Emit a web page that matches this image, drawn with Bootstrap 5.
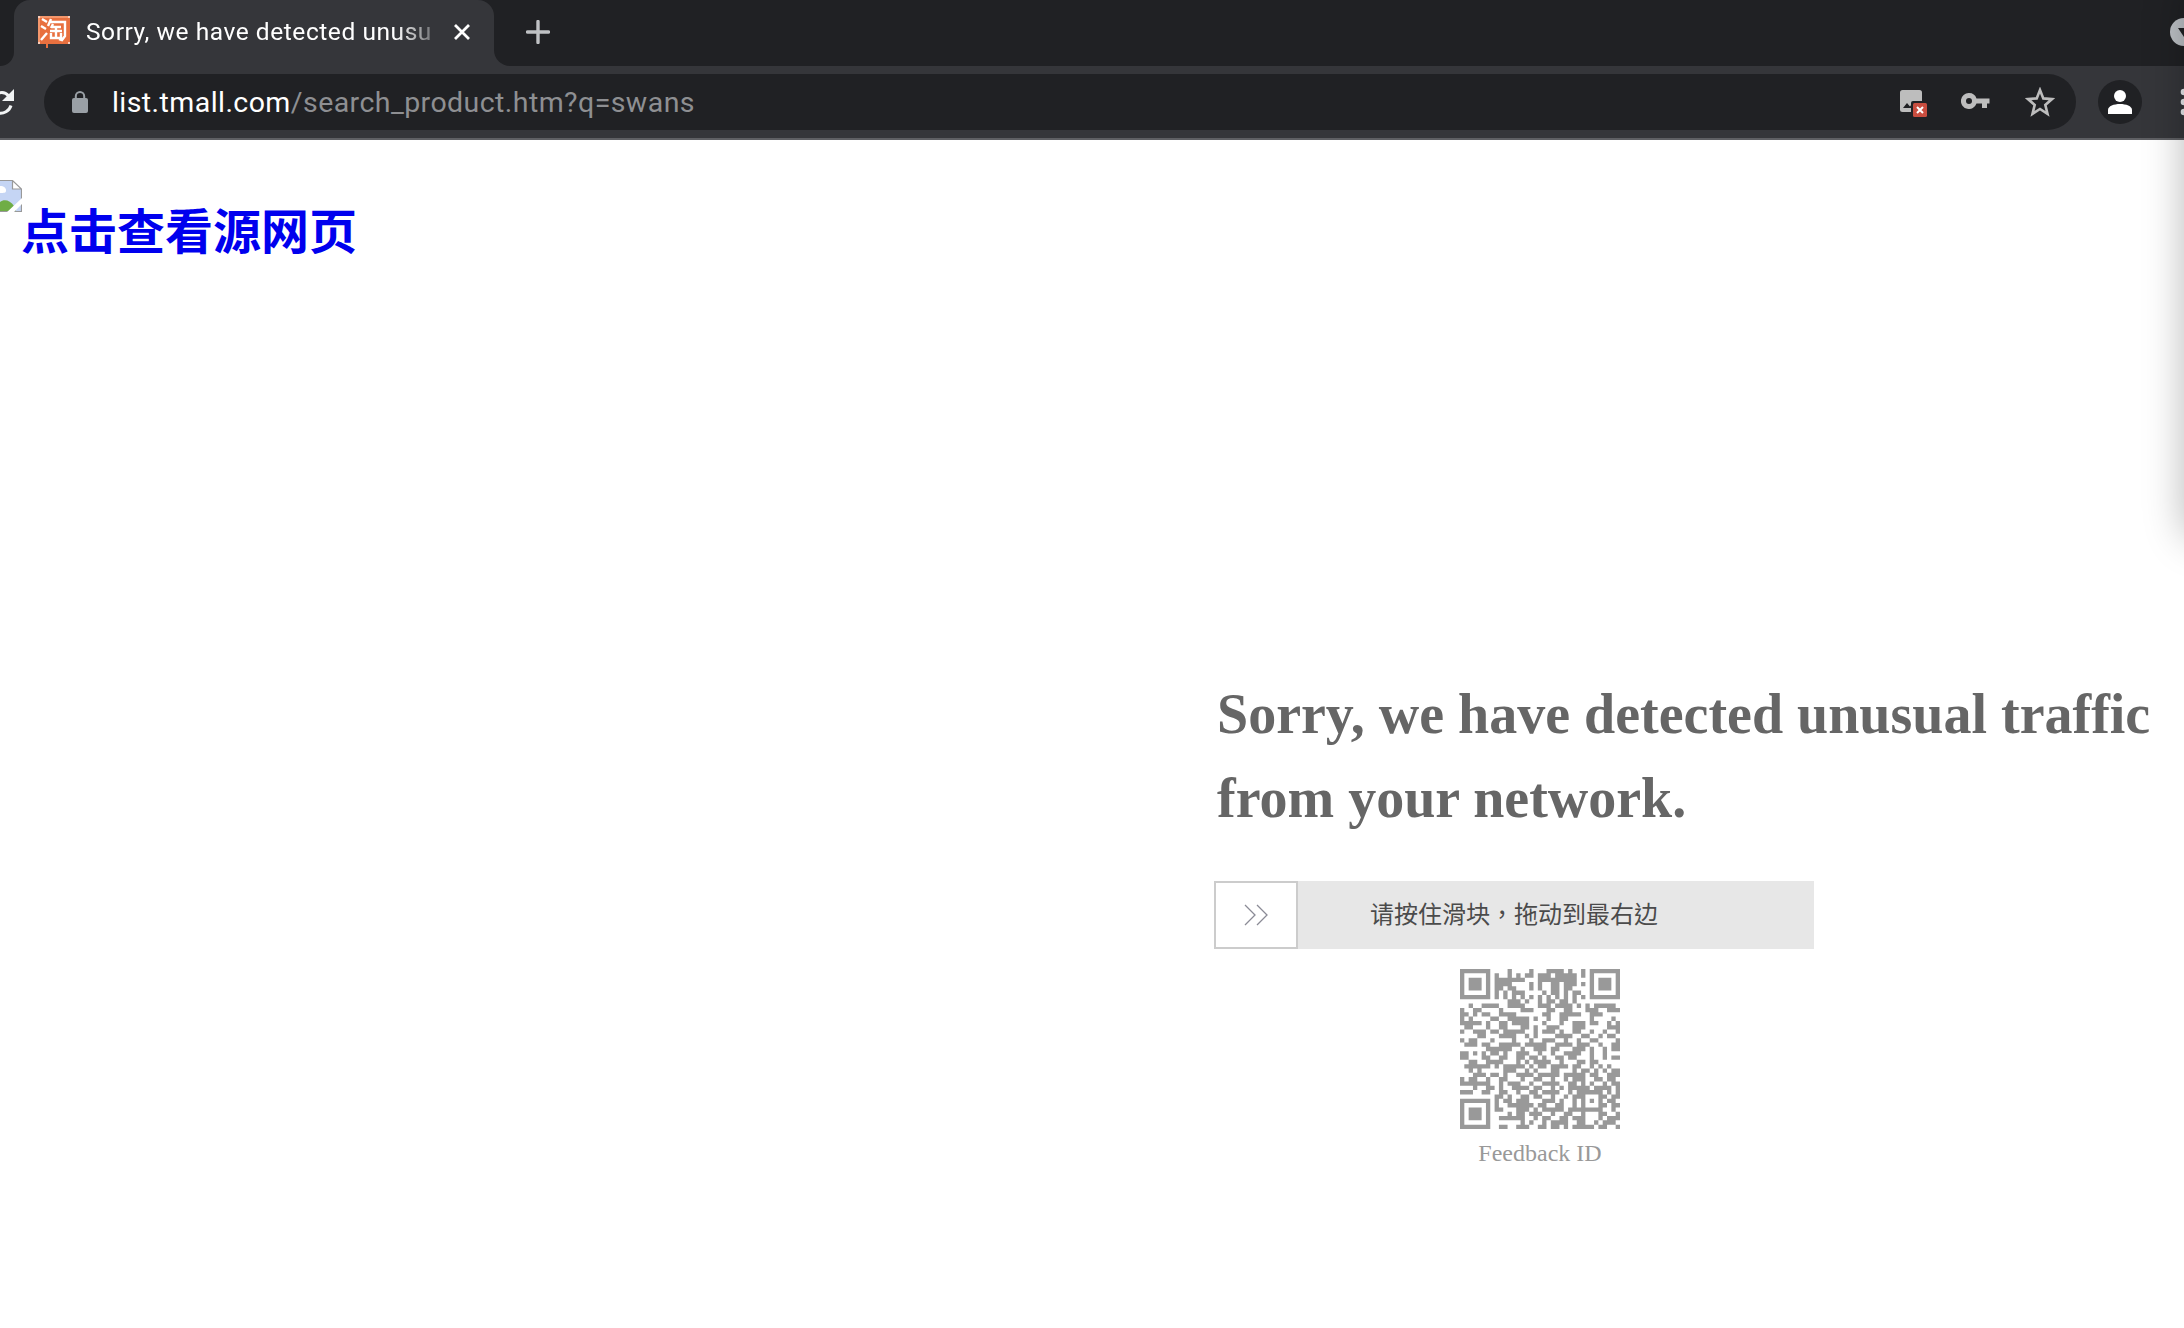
<!DOCTYPE html>
<html lang="zh">
<head>
  <meta charset="UTF-8">
  <meta name="viewport" content="width=device-width, initial-scale=1.0">
  <title>Sorry, we have detected unusual traffic</title>
  <link href="https://cdn.jsdelivr.net/npm/bootstrap@5.3.0/dist/css/bootstrap.min.css" rel="stylesheet">
  <style>
    body { width: 2184px; height: 1328px; overflow: hidden; font-family: "Liberation Serif", "Noto Sans CJK SC", serif; }
    svg { display: block; flex-shrink: 0; }
    .tab-strip { height: 66px; background: #202124; font-family: Roboto, sans-serif; }
    .prev-tab { width: 14px; background: #202124; border-bottom-right-radius: 16px; }
    .strip-base { background: #35363a; }
    .active-tab { width: 480px; background: #35363a; padding-left: 24px; border-radius: 16px 16px 0 0; }
    .tab-title { width: 352px; margin-left: 16px; font-size: 24.5px; line-height: 64px; letter-spacing: .56px; color: #fff;
      -webkit-mask-image: linear-gradient(90deg, #000 88%, transparent 103%); mask-image: linear-gradient(90deg, #000 88%, transparent 103%); }
    .strip-rest { background: #202124; border-bottom-left-radius: 16px; padding-left: 32px; }
    .tool-bar { height: 74px; background: #35363a; border-bottom: 2px solid #5f6064; padding-top: 8px; }
    .omnibox { width: 2032px; height: 56px; margin-left: 30px; border-radius: 28px; background: #202124; padding: 0 21px 0 28px; }
    .url { margin-left: 24px; padding-top: 1px; font: 28.5px/56px Roboto, sans-serif; letter-spacing: .43px; color: #8e8f92; }
    .url span { color: #fff; }
    .avatar { width: 44px; height: 44px; margin-left: 22px; background: #202124; }
    .page { height: 1188px; background: #fff; }
    .edge-shade { position: absolute; top: -20px; right: -100px; width: 100px; height: 560px; border-radius: 20px; box-shadow: 0 0 40px rgba(0, 0, 0, .28); }
    .logo-link { padding-top: 40px; height: 496px; color: #0000ee; font-size: 48px; font-weight: 700; line-height: 48px; text-decoration: none; }
    .logo-link span { padding-top: 29px; margin-left: -1px; }
    .notice { margin-left: 1214px; }
    .notice h1 { margin: 0; padding: 36px 0 0 3px; font-size: 56px; font-weight: 700; line-height: 84px; color: #666; }
    .captcha { width: 600px; margin-top: 41px; }
    .track { height: 68px; background: #e7e7e7; color: #4b4b4b; font-size: 24px; font-family: "Noto Sans CJK TC", sans-serif; }
    .handle { width: 84px; height: 68px; border: 2px solid #ccc; background: #fff; }
    .track-text { margin-left: 72px; line-height: 64px; }
    .feedback { padding-top: 20px; padding-left: 52px; color: #999; font-size: 24px; line-height: 48px; }
  </style>
</head>
<body class="position-relative">
  <header>
    <div class="tab-strip d-flex">
      <div class="strip-base d-flex"><div class="prev-tab"></div></div>
      <div class="active-tab d-flex align-items-start">
        <svg width="32" height="38" viewBox="0 0 32 38" style="margin-top:16px">
          <path d="M2 0h28l2 2v24l-2 2H10v4H8v-4H2l-2-2V2z" fill="#e8703f"/>
          <path d="M2 1h28M1 2v24" stroke="#f4976c" stroke-width="2"/>
          <path d="M0 0h2v2H0zM30 0h2v2h-2zM0 26h2v2H0zM30 26h2v2h-2z" fill="#f9cdb9"/>
          <path d="M4 3l5 3M3 10l5 3M3 24l6-7M13 3l-3 7M12 6h15v14l-3 4-3-1M15 8l-2 4M14 11h9M12 15h12M18 11v10M13 17v5h10v-5" stroke="#fff" stroke-width="2.4" fill="none"/>
        </svg>
        <div class="tab-title text-nowrap">Sorry, we have detected unusu</div>
        <svg width="16" height="16" viewBox="0 0 16 16" style="margin:24px 0 0 16px"><path d="M1 1l14 14M15 1L1 15" stroke="#fff" stroke-width="2.8"/></svg>
      </div>
      <div class="strip-base flex-grow-1 d-flex">
        <div class="strip-rest flex-grow-1 d-flex justify-content-between">
          <svg width="24" height="24" viewBox="0 0 24 24" style="margin-top:20px"><path d="M12 1.5v21M1.5 12h21" stroke="#bfc1c4" stroke-width="3.4" stroke-linecap="round"/></svg>
          <svg width="14" height="28" viewBox="0 0 14 28" style="margin-top:18px"><circle cx="14" cy="14" r="14" fill="#bdc1c6"/><path d="M8 10h12l-6 9z" fill="#202124"/></svg>
        </div>
      </div>
    </div>
    <div class="tool-bar d-flex align-items-start">
      <svg width="14" height="28" viewBox="0 0 14 28" style="margin-top:14px"><path d="M-8 14a9.5 9.5 0 0 1 16.7-6M11 17.500A11 11 0 0 1-2 25" fill="none" stroke="#f1f3f4" stroke-width="3"/><path d="M14 1v12H2z" fill="#f1f3f4"/></svg>
      <div class="omnibox d-flex align-items-center">
        <svg width="16" height="22" viewBox="0 0 16 22"><rect y="7" width="16" height="15" rx="2" fill="#9aa0a6"/><path d="M3.8 8V5.2a4.2 4.2 0 0 1 8.4 0V8" fill="none" stroke="#9aa0a6" stroke-width="2"/></svg>
        <div class="url flex-grow-1"><span>list.tmall.com</span>/search_product.htm?q=swans</div>
        <svg width="28" height="28" viewBox="0 0 28 28" style="margin:3px 34px 0 0"><rect x="1" width="22" height="22" rx="2.5" fill="#bdbdbd"/><path d="M4 18l4-5 3 3.5L15 11l5 7z" fill="#202124"/><rect x="12" y="11" width="17" height="17" rx="2" fill="#202124"/><rect x="14" y="13" width="14" height="14" rx="1.5" fill="#c94d3f"/><path d="M18 17l6 6M24 17l-6 6" stroke="#fff" stroke-width="2"/></svg>
        <svg width="30" height="16" viewBox="0 0 30 16" style="margin-right:34px;margin-top:-2px"><path fill-rule="evenodd" d="M8 0a8 8 0 1 0 7.5 10.5H21V15h5v-4.500h2.500V5.500H15.500A8 8 0 0 0 8 0zM8 5a3 3 0 1 1 0 6 3 3 0 0 1 0-6z" fill="#bdbdbd"/></svg>
        <svg width="30" height="30" viewBox="0 0 30 30"><path d="M15 3l3.300 8.400 8.700.700-6.700 5.800 2.200 8.900L15 22l-7.500 4.800 2.200-8.900L3 12.100l8.700-.700z" fill="none" stroke="#bdbdbd" stroke-width="2.600"/></svg>
      </div>
      <div class="avatar rounded-circle d-flex justify-content-center" style="margin-top:6px">
        <svg width="24" height="24" viewBox="0 0 24 24" style="margin-top:10px"><circle cx="12" cy="6" r="6" fill="#fff"/><path d="M0 24v-4c0-4 6-6 12-6s12 2 12 6v4z" fill="#fff"/></svg>
      </div>
      <svg class="ms-auto" width="4" height="28" viewBox="0 0 4 28" style="margin-top:14px"><g fill="#e8eaed"><circle cx="4" cy="4" r="3.300"/><circle cx="4" cy="14" r="3.300"/><circle cx="4" cy="24" r="3.300"/></g></svg>
    </div>
  </header>

  <main class="page">
    <a class="logo-link d-flex align-items-start" href="#">
      <svg width="22" height="32" viewBox="0 0 22 32">
        <path d="M0 .5h12.500L21.500 9v22.500H0z" fill="#c5d5f4"/>
        <path d="M0 6c4 0 6 2 6 4.500S4 13 0 13z" fill="#fff"/>
        <path d="M0 22c4-3 10-2 14 4l2 5.500H0z" fill="#6fad46"/>
        <path d="M12.500.5V9h9z" fill="#fff"/>
        <path d="M0 .5h12.500L21.500 9v22.500H0M12.500.5V9h9" fill="none" stroke="#999" stroke-width="1.200"/>
        <path d="M6 33L23 17v6L13 33z" fill="#fff"/>
      </svg>
      <span>点击查看源网页</span>
    </a>
    <section class="notice">
      <h1>Sorry, we have detected unusual traffic<br>from your network.</h1>
      <div class="captcha">
        <div class="track d-flex">
          <div class="handle d-flex align-items-center justify-content-center">
            <svg width="24" height="22" viewBox="0 0 24 22"><path d="M1 1l10 10L1 21M13 1l10 10-10 10" fill="none" stroke="#8b8b96" stroke-width="1.300"/></svg>
          </div>
          <div class="track-text text-nowrap" lang="zh-TW">请按住滑块，拖动到最右边</div>
        </div>
        <div class="feedback d-flex flex-column align-items-center">
          <svg id="qr" width="160" height="160" viewBox="0 0 37 37"></svg>
          <div>Feedback ID</div>
        </div>
      </div>
    </section>
  </main>
  <div class="edge-shade"></div>

  <script>
    // One string per QR row, 1 = filled module
    const rows = [
      "1111111000010000100011110100101111111",
      "1000001010010101101110111110101000001",
      "1011101011111110001111111110001011101",
      "1011101011110000101001101110101011101",
      "1011101011011000101001101100001011101",
      "1000001010101110000101101011001000001",
      "1111111010101010101010101010101111111",
      "0000000000011101001011011010000000000",
      "0010011110011110001110111101010111110",
      "1001100001000011100011001100011100111",
      "1101011001111000000110011111001110000",
      "1010000110011111010010011000001000010",
      "1111101001101111000100010011101100101",
      "0110001001100011010011100011100000111",
      "1001110110111110010111010011001001001",
      "0000110001111001010000111100110010110",
      "1011000100001000100111001001001100001",
      "0111011001111101111100111101110010011",
      "0000001111110010011101100011101001011",
      "1101010110100111001001001111001001000",
      "1100011001100110110100110110001001011",
      "0011001111000101011110010001101100000",
      "0111111010111110101101111011001010100",
      "0010100000111001010001100010110101011",
      "0001110110100111101111101111101100111",
      "1011001001100010011001001011100110110",
      "1111111001011100100111100110101001011",
      "0001001101001111011001010111110111101",
      "1110011001100100110111100101111110101",
      "0000000011010011011001001011100011011",
      "1111111010110111000111010010101010110",
      "1000001010011111101100110010100011011",
      "1011101011000111010111110111111110010",
      "1011101000010110111001001100100011001",
      "1011101001111110010110011011100010111",
      "1000001000000010100101111001100101110",
      "1111111001100111001101101011111011001"
    ];
    let d = "";
    rows.forEach((row, y) => {
      for (const run of row.matchAll(/1+/g)) {
        d += `M${run.index} ${y}h${run[0].length}v1h-${run[0].length}z`;
      }
    });
    document.getElementById("qr").innerHTML = `<path d="${d}" fill="#999"/>`;
  </script>
  <script src="https://cdn.jsdelivr.net/npm/bootstrap@5.3.0/dist/js/bootstrap.bundle.min.js"></script>
</body>
</html>
